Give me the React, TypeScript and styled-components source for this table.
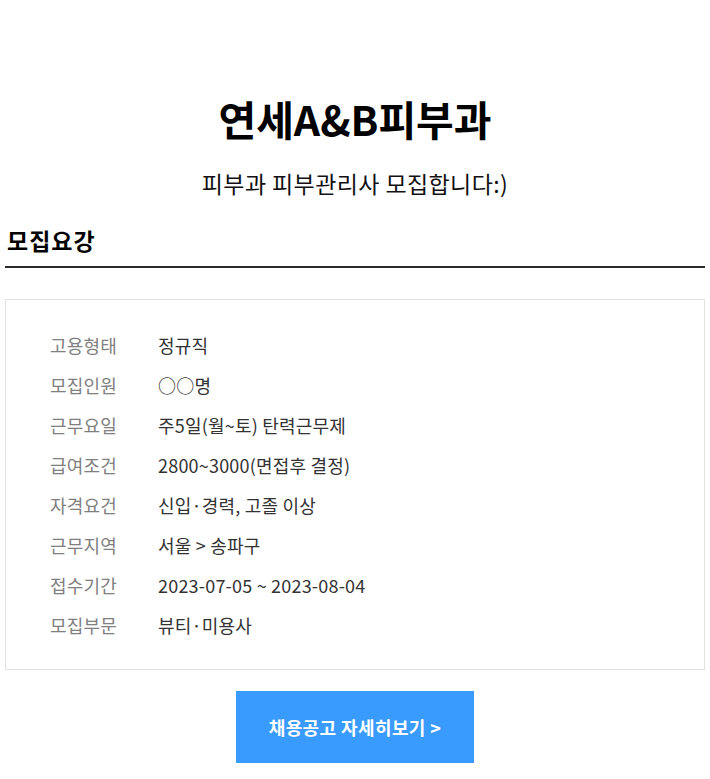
import React from "react";
import styled, { createGlobalStyle } from "styled-components";

const Global = createGlobalStyle`
  html, body { margin: 0; padding: 0; background: #fff; }
  body { font-family: "Noto Sans CJK KR", "Noto Sans", sans-serif; color: #111; }
`;

const Page = styled.div`
  width: 700px;
  padding: 0 5px;
  display: flex;
  flex-direction: column;
`;

const Header = styled.header`
  display: flex;
  flex-direction: column;
  align-items: center;
  padding-top: 92px;
`;

const Title = styled.h1`
  margin: 0;
  font-size: 41px;
  line-height: 52px;
  font-weight: 700;
  color: #000;
`;

const Subtitle = styled.p`
  margin: 24px 0 0;
  font-size: 23px;
  line-height: 30px;
  letter-spacing: 0.4px;
  font-weight: 400;
  color: #111;
`;

const SectionTitle = styled.h2`
  margin: 27px 0 0;
  padding: 0 0 11px 2px;
  font-size: 23px;
  line-height: 30px;
  letter-spacing: 1px;
  font-weight: 700;
  color: #000;
  border-bottom: 2px solid #2b2b2b;
`;

const InfoBox = styled.dl`
  margin: 31px 0 0;
  padding: 25px 0 24px 0;
  border: 1px solid #e2e2e2;
  display: grid;
  grid-template-columns: 152px 1fr;
  grid-auto-rows: 40px;
`;

const Label = styled.dt`
  padding-left: 44px;
  font-size: 18px;
  line-height: 40px;
  letter-spacing: 0.2px;
  color: #808080;
`;

const Value = styled.dd`
  margin: 0;
  font-size: 18px;
  line-height: 40px;
  letter-spacing: 0.2px;
  color: #333;
`;

const ButtonRow = styled.div`
  display: flex;
  justify-content: center;
  padding: 21px 0 16px;
`;

const DetailButton = styled.a`
  display: flex;
  align-items: center;
  justify-content: center;
  width: 238px;
  height: 72px;
  background: #3a9bff;
  color: #fff;
  font-size: 18px;
  letter-spacing: 0.4px;
  font-weight: 700;
  text-decoration: none;
`;

const rows: [string, string][] = [
  ["고용형태", "정규직"],
  ["모집인원", "○○명"],
  ["근무요일", "주5일(월~토) 탄력근무제"],
  ["급여조건", "2800~3000(면접후 결정)"],
  ["자격요건", "신입·경력, 고졸 이상"],
  ["근무지역", "서울 > 송파구"],
  ["접수기간", "2023-07-05 ~ 2023-08-04"],
  ["모집부문", "뷰티·미용사"],
];

export default function App() {
  return (
    <>
      <Global />
      <Page>
        <Header>
          <Title>연세A&amp;B피부과</Title>
          <Subtitle>피부과 피부관리사 모집합니다:)</Subtitle>
        </Header>
        <SectionTitle>모집요강</SectionTitle>
        <InfoBox>
          {rows.map(([k, v]) => (
            <React.Fragment key={k}>
              <Label>{k}</Label>
              <Value>{v}</Value>
            </React.Fragment>
          ))}
        </InfoBox>
        <ButtonRow>
          <DetailButton href="#">채용공고 자세히보기 &gt;</DetailButton>
        </ButtonRow>
      </Page>
    </>
  );
}
